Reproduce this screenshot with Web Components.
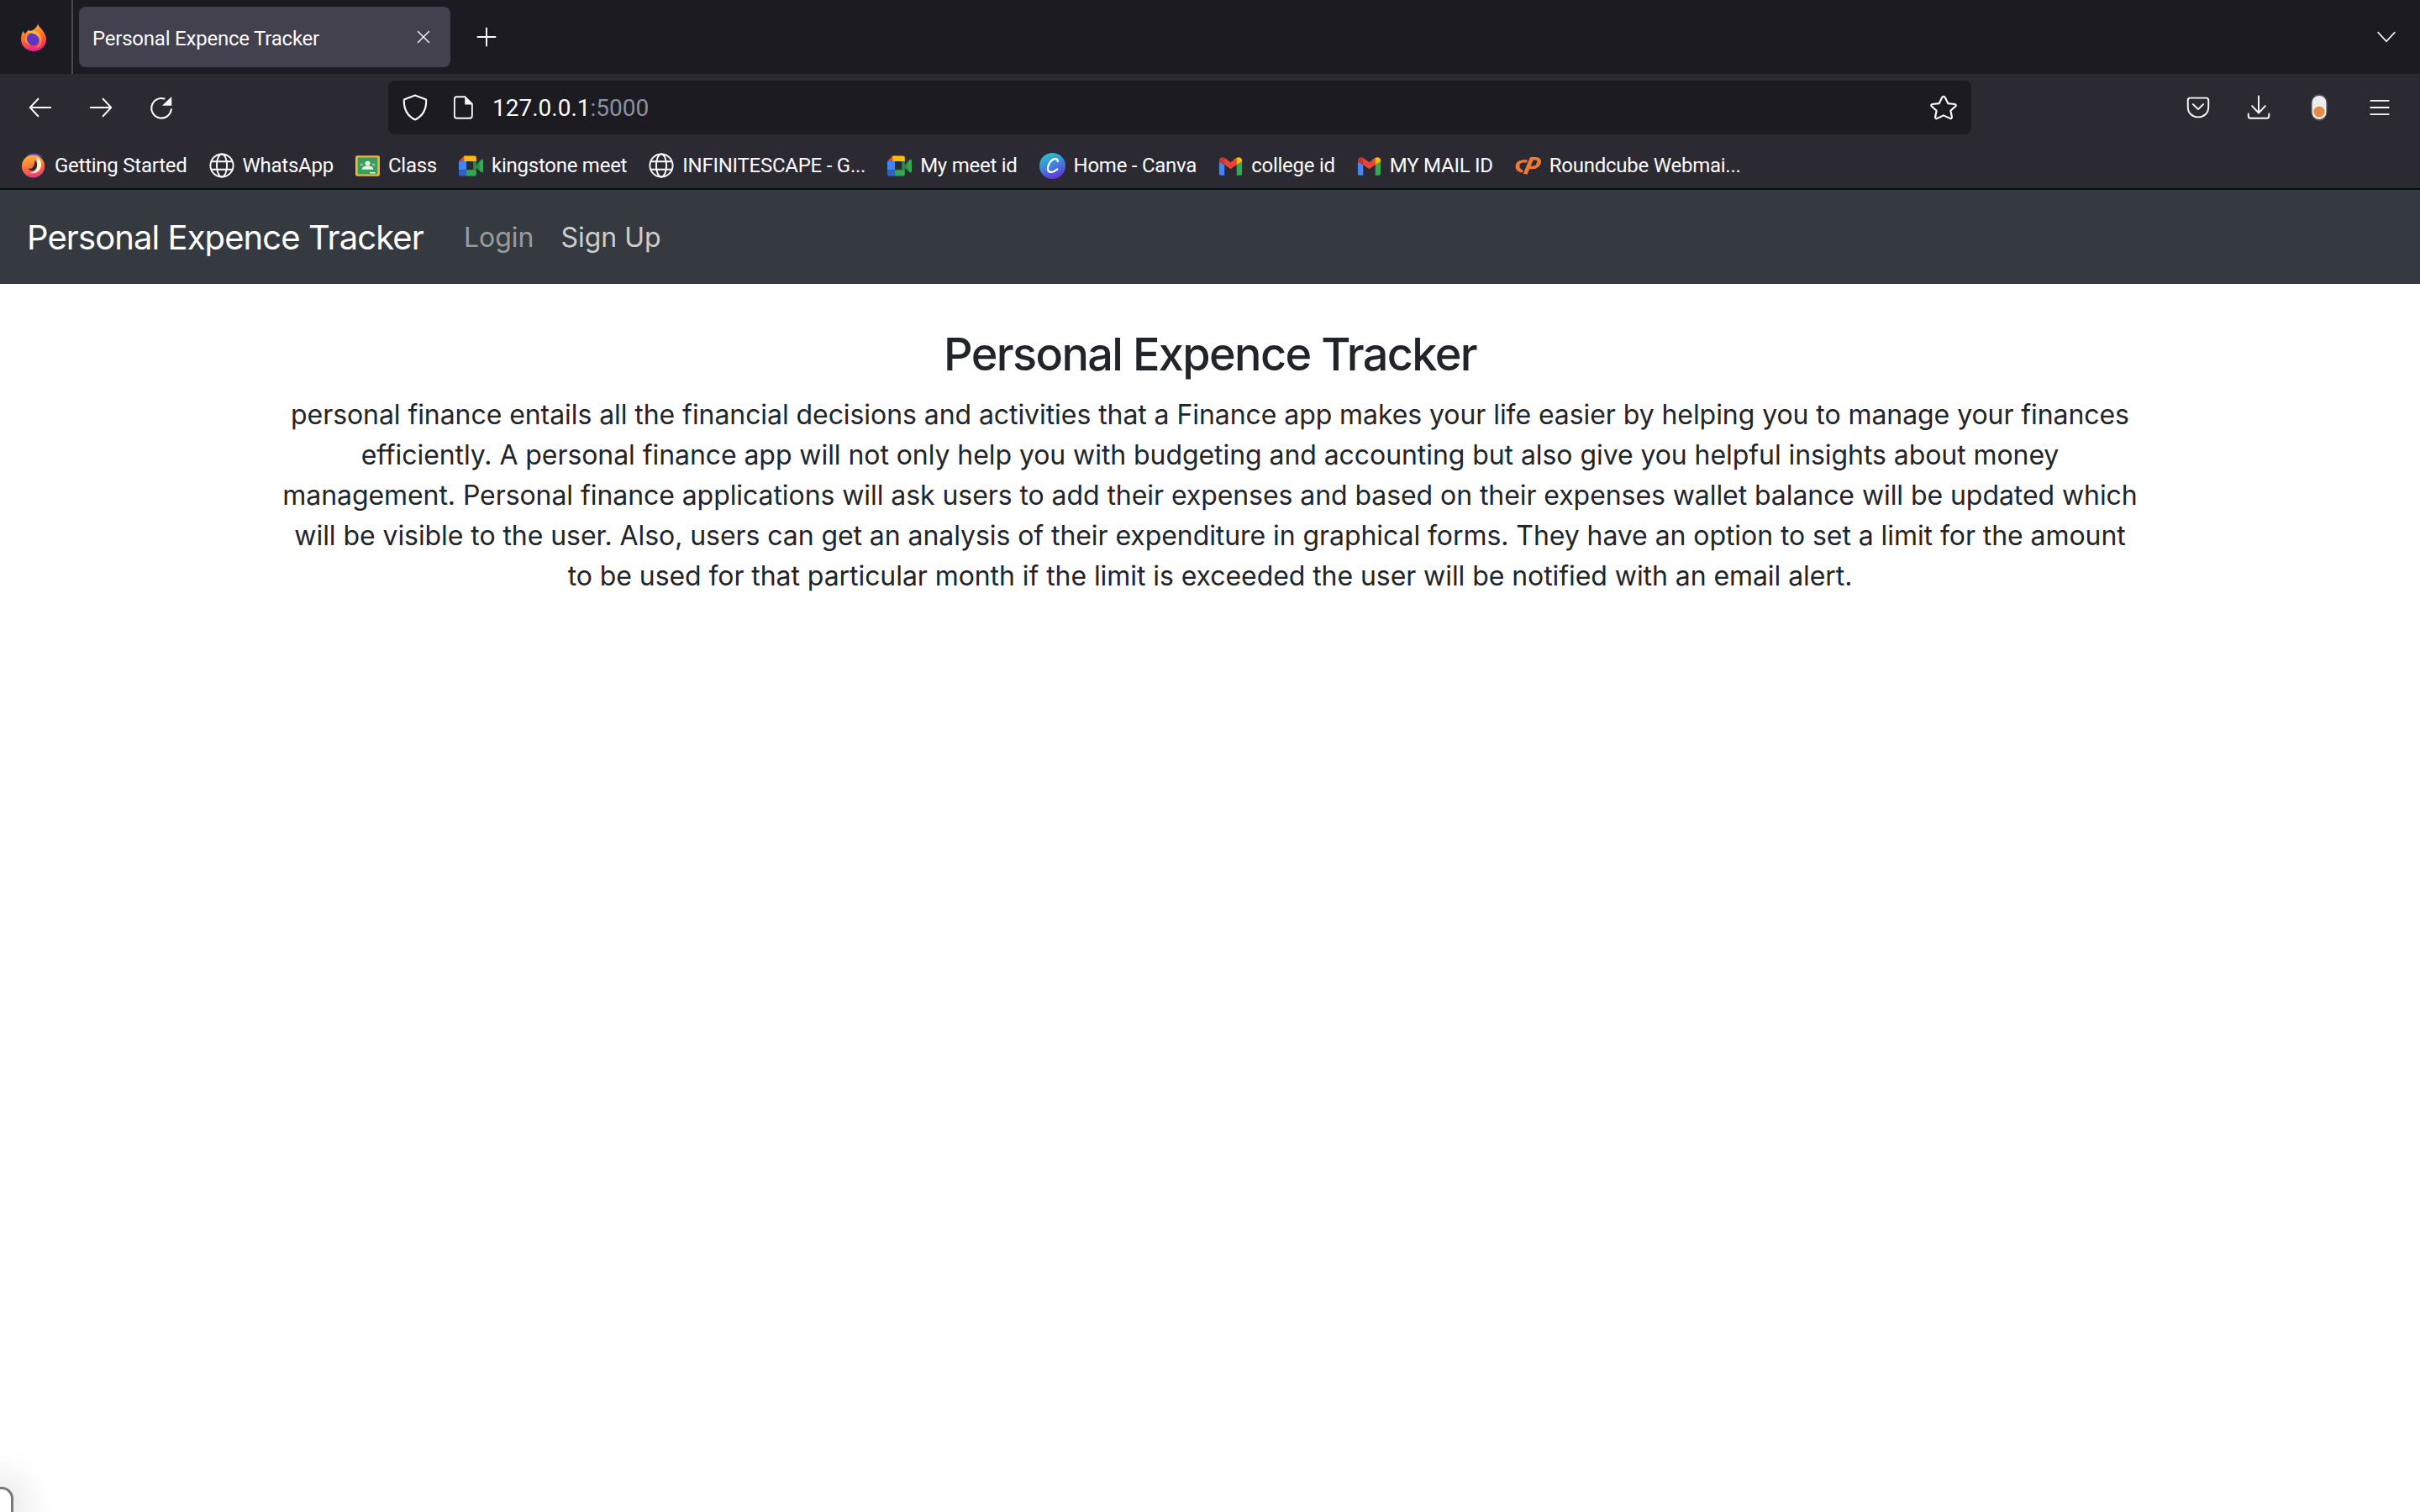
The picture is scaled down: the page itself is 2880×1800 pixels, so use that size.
<!DOCTYPE html>
<html lang="en">
<head>
<meta charset="utf-8">
<title>Personal Expence Tracker</title>
<style>
  html, body { margin: 0; padding: 0; background: #fff; }
  body { font-family: Inter, "Liberation Sans", sans-serif; }
</style>
</head>
<body>
<browser-window>
  <tab-strip title-text="Personal Expence Tracker"></tab-strip>
  <nav-toolbar address-host="127.0.0.1" address-port=":5000"></nav-toolbar>
  <bookmarks-bar>
    <bookmark-item icon="firefox-old" w="30" h="30">Getting Started</bookmark-item>
    <bookmark-item icon="globe" w="30" h="30">WhatsApp</bookmark-item>
    <bookmark-item icon="classroom" w="29" h="25">Class</bookmark-item>
    <bookmark-item icon="meet" w="29" h="25">kingstone meet</bookmark-item>
    <bookmark-item icon="globe" w="30" h="30">INFINITESCAPE - G...</bookmark-item>
    <bookmark-item icon="meet" w="29" h="25">My meet id</bookmark-item>
    <bookmark-item icon="canva" w="31" h="31">Home - Canva</bookmark-item>
    <bookmark-item icon="gmail" w="29" h="23">college id</bookmark-item>
    <bookmark-item icon="gmail" w="29" h="23">MY MAIL ID</bookmark-item>
    <bookmark-item icon="cpanel" w="31" h="22">Roundcube Webmai...</bookmark-item>
  </bookmarks-bar>
  <app-navbar brand="Personal Expence Tracker">
    <a slot="links" class="muted">Login</a>
    <a slot="links" class="hover">Sign Up</a>
  </app-navbar>
  <home-content heading="Personal Expence Tracker">
    personal finance entails all the financial decisions and activities that a Finance app makes your life easier by helping you to manage your finances<br>
    efficiently. A personal finance app will not only help you with budgeting and accounting but also give you helpful insights about money<br>
    management. Personal finance applications will ask users to add their expenses and based on their expenses wallet balance will be updated which<br>
    will be visible to the user. Also, users can get an analysis of their expenditure in graphical forms. They have an option to set a limit for the amount<br>
    to be used for that particular month if the limit is exceeded the user will be notified with an email alert.
  </home-content>
  <corner-peek></corner-peek>
</browser-window>

<script>
// iconos dibujados a mano, viewBox 32x32
const ICONS = {
  back: `<path d="M30 16H3M13 5 2 16l11 11" fill="none" stroke="#fbfbfe" stroke-width="2.2" stroke-linecap="round" stroke-linejoin="round"/>`,
  forward: `<path d="M2 16h27M19 5l11 11-11 11" fill="none" stroke="#fbfbfe" stroke-width="2.2" stroke-linecap="round" stroke-linejoin="round"/>`,
  reload: `<path d="M29.500 18.500A13.500 13.500 0 1 1 20 4" fill="none" stroke="#fbfbfe" stroke-width="2.400" stroke-linecap="round"/><path d="M30 1v12.500H17z" fill="#fbfbfe"/>`,
  shield: `<path d="M16 1.500 30 6.500c.6 11-3 19-14 24C5 25.500 1.400 17.500 2 6.500z" fill="none" stroke="#fbfbfe" stroke-width="2.200" stroke-linejoin="round"/>`,
  file: `<path d="M6 1.500h13L30.500 11v16a3.500 3.500 0 0 1-3.500 3.500H6A3.500 3.500 0 0 1 2.500 27V5A3.500 3.500 0 0 1 6 1.500z" fill="none" stroke="#fbfbfe" stroke-width="2.400"/><path d="M19 1.500V12h11.500z" fill="#fbfbfe"/>`,
  star: `<path d="M16 2c.9 0 1.400.5 1.800 1.200l3.500 7.600 8 1c1.500.2 2 1.700.9 2.700l-5.800 5.500 1.500 8c.2 1.500-1.100 2.500-2.500 1.800L16 26l-7.400 3.800c-1.400.7-2.700-.3-2.500-1.800l1.500-8-5.800-5.500c-1.100-1-.6-2.500.9-2.700l8-1 3.500-7.600C14.600 2.500 15.100 2 16 2z" fill="none" stroke="#fbfbfe" stroke-width="2.200" stroke-linejoin="round"/>`,
  pocket: `<path d="M5 3h22a3 3 0 0 1 3 3v9c0 9-6.500 14-14 14S2 24 2 15V6a3 3 0 0 1 3-3z" fill="none" stroke="#fbfbfe" stroke-width="2.200"/><path d="m9 11.500 7 7 7-7" fill="none" stroke="#fbfbfe" stroke-width="2.200" stroke-linecap="round" stroke-linejoin="round"/>`,
  download: `<path d="M16 1.500V22M7 14l9 9 9-9" fill="none" stroke="#fbfbfe" stroke-width="2.200" stroke-linecap="round" stroke-linejoin="round"/><path d="M2 24v3a2.500 2.500 0 0 0 2.500 2.500h23A2.500 2.500 0 0 0 30 27v-3" fill="none" stroke="#fbfbfe" stroke-width="2.200" stroke-linecap="round"/>`,
  extension: `<rect x="1.500" y="1" width="29" height="30" rx="14" ry="9" fill="#eceeec" stroke="#4c4b52" stroke-width="2"/><ellipse cx="16" cy="21" rx="10.500" ry="6.500" fill="#e88a45"/>`,
  menu: `<path d="M2 6h28M2 16h28M2 26h28" fill="none" stroke="#fbfbfe" stroke-width="2.400" stroke-linecap="butt"/>`,
  close: `<path d="m3 3 26 26M29 3 3 29" fill="none" stroke="#fbfbfe" stroke-width="2.800" stroke-linecap="round"/>`,
  plus: `<path d="M16 2v28M2 16h28" fill="none" stroke="#fbfbfe" stroke-width="2.600" stroke-linecap="round"/>`,
  chevron: `<path d="m3 9 13 14L29 9" fill="none" stroke="#fbfbfe" stroke-width="2.400" stroke-linecap="round" stroke-linejoin="round"/>`,
  globe: `<g fill="none" stroke="#fbfbfe" stroke-width="2.100"><circle cx="16" cy="16" r="14.500"/><ellipse cx="16" cy="16" rx="6.500" ry="14.500"/><path d="M2.500 11h27M2.500 21h27"/></g>`,
  firefox: `<defs>
      <linearGradient id="fx" x1=".3" y1="0" x2=".5" y2="1"><stop offset="0" stop-color="#ffc02e"/><stop offset=".5" stop-color="#ff6a2c"/><stop offset="1" stop-color="#e3208f"/></linearGradient>
      <linearGradient id="fz" x1="0" y1="0" x2=".3" y2="1"><stop offset="0" stop-color="#ffc23a"/><stop offset="1" stop-color="#ff7a2c"/></linearGradient>
    </defs>
    <path d="M21 0c.5 3 3.500 5 6 8.500 2.500 3.500 4 6.500 4 9.500 0 8-6.500 14-15 14S1 26 1 18c0-3 .8-6.500 2.500-9.500.5 1.500 1.200 2.500 2.500 3.500 1-2 2.500-3.500 4.500-5 .2 1.200.8 2 2 2.500C16 7 20.500 4.500 21 0z" fill="url(#fx)"/>
    <circle cx="15.500" cy="18" r="7.500" fill="#5b34c8"/>
    <path d="M9 10c5-3 12-2 15 3 2 4 2 8 .5 11.500C23 27 19 29 15.500 28.500c4 0 7.500-3.500 7.500-8 0-3.500-2-6.500-5-8-3-1.500-6-1-9-2.500z" fill="url(#fz)"/>
    <path d="M8 15c-1 4 1 8 4.500 9.500-4 0-7-3-7-7 0-1.500 1-2.500 2.500-2.500z" fill="#ff9a2c"/>`,
  "firefox-old": `<defs><linearGradient id="fy" x1=".3" y1="0" x2=".5" y2="1"><stop offset="0" stop-color="#ffb93a"/><stop offset=".55" stop-color="#ff6f3c"/><stop offset="1" stop-color="#e5397f"/></linearGradient></defs>
    <circle cx="15.500" cy="17" r="14.500" fill="url(#fy)"/>
    <path d="M7 4C12-.5 23-1 28 6.500 24 3.500 20 2.500 16 3 12.500 3.300 9.500 3.500 7 4z" fill="#7b4bd6"/>
    <path d="M20 5c5 3 7 9 5 14-2 6-9 8-14 6 5 0 9-3 9.500-8 .4-4-.5-8-.5-12z" fill="#fff3d8"/>
    <path d="M18 9c3 4 3 9 0 12-3 2.500-7 2-9-1 3 .5 5.500-.5 7-3 1-2.500 1-5 2-8z" fill="#2b2a33"/>`,
  classroom: `<rect x="1.500" y="1.800" width="29" height="28.400" fill="#3a9d5c" stroke="#f2b632" stroke-width="3" rx="1"/><circle cx="16" cy="12" r="3.400" fill="#e6f3ea"/><path d="M8.500 21.500c0-4.500 3.500-5.500 7.500-5.500s7.500 1 7.500 5.500z" fill="#e6f3ea"/><circle cx="8" cy="14" r="2" fill="#84c99f"/><circle cx="24" cy="14" r="2" fill="#84c99f"/><rect x="19" y="25.500" width="7" height="2" fill="#fff"/>`,
  meet: `<path d="M7 .5 0 9h10V.5z" fill="#ea4335"/><path d="M7 .5h13a3 3 0 0 1 3 3V9H7z" fill="#fbbc04"/><path d="M0 9h10v13H0z" fill="#4285f4"/><path d="M0 22h10v9.500H3a3 3 0 0 1-3-3z" fill="#2f62c9"/><path d="M10 22h13v6.500a3 3 0 0 1-3 3H10z" fill="#34a853"/><path d="M19 9h4v13h-4z" fill="#2d8a47"/><path d="m23 15 6.500-8.500c1-1 2.500-.5 2.500 1v17c0 1.500-1.500 2-2.500 1L23 19z" fill="#34a853"/><path d="m23 15 4-5v13l-4-4z" fill="#2d8a47"/>`,
  canva: `<defs><linearGradient id="cv" x1=".2" y1="0" x2=".6" y2="1"><stop offset="0" stop-color="#2ec4c6"/><stop offset=".55" stop-color="#3f7fe0"/><stop offset="1" stop-color="#6a2fd8"/></linearGradient></defs><circle cx="16" cy="16" r="16" fill="url(#cv)"/><path d="M22.500 10.500C22.500 7 19 6.500 16 8.500 12 11.500 9.500 17 10.500 21c1 3.500 6.500 3.500 11.500-1" fill="none" stroke="#fff" stroke-width="2.300" stroke-linecap="round"/>`,
  gmail: `<path d="M1 9v20c0 1.200.8 2.500 2.200 2.500H8V14z" fill="#4285f4"/><path d="M31 9v20c0 1.200-.8 2.500-2.200 2.500H24V14z" fill="#34a853"/><path d="M8 5 16 12.500 24 5v9l-8 7-8-7z" fill="#ea4335"/><path d="M1 7c0-4.500 4-7 7.500-4L12 6v4.500L8 14 1 9z" fill="#c5372c"/><path d="M31 7c0-4.500-4-7-7.500-4L20 6v4.500L24 14l7-5z" fill="#fbbc04"/><path d="M8 3 16 10 24 3v11l-8 7-8-7z" fill="#ea4335"/>`,
  cpanel: `<g fill="none" stroke="#ef7a35" stroke-width="5"><path d="M15 8.500h-4.500C5.500 8.500 3 13 3 17.500S6 26 9.500 26"/><path d="M12.500 31 20.500 4h5c3 0 4.500 3 4 6.500-.5 4-3 9-8 9H18" stroke-linejoin="round"/></g>`
};

class UiIcon extends HTMLElement {
  constructor() {
    super();
    this.attachShadow({ mode: 'open' });
  }
  connectedCallback() {
    const name = this.getAttribute('name');
    const w = this.getAttribute('w') || 32;
    const h = this.getAttribute('h') || w;
    this.shadowRoot.innerHTML = `
      <style>:host { display: block; width: ${w}px; height: ${h}px; flex: none; }</style>
      <svg xmlns="http://www.w3.org/2000/svg" viewBox="0 0 32 32" width="${w}" height="${h}" preserveAspectRatio="none" style="display:block;overflow:visible">${ICONS[name]}</svg>
    `;
  }
}
customElements.define('ui-icon', UiIcon);

class BrowserWindow extends HTMLElement {
  constructor() {
    super();
    this.attachShadow({ mode: 'open' }).innerHTML = `
      <style>
        :host {
          display: flex;
          flex-direction: column;
          position: relative;
          height: 1800px;
          overflow: hidden;
          background: #fff;
          font-family: Inter, "Liberation Sans", sans-serif;
        }
      </style>
      <slot></slot>
    `;
  }
}
customElements.define('browser-window', BrowserWindow);

class TabStrip extends HTMLElement {
  constructor() {
    super();
    this.attachShadow({ mode: 'open' });
  }
  connectedCallback() {
    this.shadowRoot.innerHTML = `
      <style>
        :host {
          display: flex;
          align-items: center;
          height: 88px;
          background: #1c1b22;
          color: #fbfbfe;
        }
        .logo { width: 85px; height: 88px; display: flex; align-items: center; justify-content: center; box-sizing: border-box; padding-right: 5px; }
        .sep { width: 2px; height: 88px; background: #4a4950; }
        .tab {
          display: flex;
          align-items: center;
          justify-content: space-between;
          box-sizing: border-box;
          width: 442px;
          height: 72px;
          margin-left: 7px;
          padding: 0 24px 0 16px;
          background: #42414d;
          border-radius: 8px;
          font: 24px Roboto, sans-serif;
          letter-spacing: -.22px;
        }
        .tab span { padding-top: 3px; }
        .new { margin-left: 31px; }
        .spacer { flex: 1; }
        .all { margin-right: 28px; }
      </style>
      <div class="logo"><ui-icon name="firefox" w="32" h="33"></ui-icon></div>
      <div class="sep"></div>
      <div class="tab"><span>${this.getAttribute('title-text')}</span><ui-icon name="close" w="16"></ui-icon></div>
      <ui-icon class="new" name="plus" w="24"></ui-icon>
      <div class="spacer"></div>
      <ui-icon class="all" name="chevron" w="24"></ui-icon>
    `;
  }
}
customElements.define('tab-strip', TabStrip);

class NavToolbar extends HTMLElement {
  constructor() {
    super();
    this.attachShadow({ mode: 'open' });
  }
  connectedCallback() {
    this.shadowRoot.innerHTML = `
      <style>
        :host {
          display: flex;
          align-items: center;
          box-sizing: border-box;
          height: 80px;
          padding: 8px 28px 8px;
          background: #2b2a33;
        }
        .group { display: flex; align-items: center; gap: 32px; }
        .slot { width: 40px; height: 40px; display: flex; align-items: center; justify-content: center; }
        .url {
          flex: 1;
          display: flex;
          align-items: center;
          height: 64px;
          margin: 0 250px;
          padding: 0 17px;
          background: #1c1b22;
          border-radius: 8px;
          color: #fbfbfe;
          font: 28px Roboto, sans-serif;
        }
        .url .file { margin-left: 30px; }
        .url .text { margin-left: 23px; flex: 1; }
        .url .port { color: #8f8f9d; }
      </style>
      <div class="group">
        <div class="slot"><ui-icon name="back" w="28" h="30"></ui-icon></div>
        <div class="slot"><ui-icon name="forward" w="28" h="30"></ui-icon></div>
        <div class="slot"><ui-icon name="reload" w="28"></ui-icon></div>
      </div>
      <div class="url">
        <ui-icon name="shield" w="30" h="32"></ui-icon>
        <ui-icon class="file" name="file" w="24" h="28"></ui-icon>
        <span class="text">${this.getAttribute('address-host')}<span class="port">${this.getAttribute('address-port')}</span></span>
        <ui-icon name="star" w="32" h="30"></ui-icon>
      </div>
      <div class="group">
        <div class="slot"><ui-icon name="pocket" w="28"></ui-icon></div>
        <div class="slot"><ui-icon name="download" w="28" h="30"></ui-icon></div>
        <div class="slot"><ui-icon name="extension" w="20" h="32"></ui-icon></div>
        <div class="slot"><ui-icon name="menu" w="26"></ui-icon></div>
      </div>
    `;
  }
}
customElements.define('nav-toolbar', NavToolbar);

class BookmarksBar extends HTMLElement {
  constructor() {
    super();
    this.attachShadow({ mode: 'open' }).innerHTML = `
      <style>
        :host {
          display: flex;
          align-items: center;
          gap: 26px;
          box-sizing: border-box;
          height: 58px;
          padding: 2px 25px 0;
          background: #2b2a33;
          border-bottom: 2px solid #0c0c0d;
          color: #fbfbfe;
          font: 24px Roboto, sans-serif;
          letter-spacing: -.25px;
        }
      </style>
      <slot></slot>
    `;
  }
}
customElements.define('bookmarks-bar', BookmarksBar);

class BookmarkItem extends HTMLElement {
  constructor() {
    super();
    this.attachShadow({ mode: 'open' });
  }
  connectedCallback() {
    const icon = this.getAttribute('icon');
    const w = this.getAttribute('w');
    const h = this.getAttribute('h');
    this.shadowRoot.innerHTML = `
      <style>
        :host { display: flex; align-items: center; gap: 10px; white-space: nowrap; }
      </style>
      <ui-icon name="${icon}" w="${w}" h="${h}"></ui-icon>
      <span><slot></slot></span>
    `;
  }
}
customElements.define('bookmark-item', BookmarkItem);

class AppNavbar extends HTMLElement {
  constructor() {
    super();
    this.attachShadow({ mode: 'open' });
  }
  connectedCallback() {
    this.shadowRoot.innerHTML = `
      <style>
        :host {
          display: flex;
          align-items: center;
          gap: 48px;
          box-sizing: border-box;
          height: 112px;
          padding: 0 32px;
          background: #343a40;
          font-family: Inter, "Liberation Sans", sans-serif;
        }
        .brand { color: #fff; font-size: 40px; letter-spacing: -.92px; }
        nav { display: flex; gap: 32px; font-size: 32px; }
        ::slotted(.muted) { color: rgba(255, 255, 255, .5); }
        ::slotted(.hover) { color: rgba(255, 255, 255, .75); }
      </style>
      <span class="brand">${this.getAttribute('brand')}</span>
      <nav><slot name="links"></slot></nav>
    `;
  }
}
customElements.define('app-navbar', AppNavbar);

class HomeContent extends HTMLElement {
  constructor() {
    super();
    this.attachShadow({ mode: 'open' });
  }
  connectedCallback() {
    this.shadowRoot.innerHTML = `
      <style>
        :host {
          display: block;
          padding: 50px 300px 0;
          text-align: center;
          color: #212529;
          font-family: Inter, "Liberation Sans", sans-serif;
        }
        h1 { margin: 0 0 15px; font-size: 54px; font-weight: 500; line-height: 67px; letter-spacing: -1.65px; }
        p { margin: 0; font-size: 32px; line-height: 48px; white-space: nowrap; letter-spacing: -.07px; }
      </style>
      <h1>${this.getAttribute('heading')}</h1>
      <p><slot></slot></p>
    `;
  }
}
customElements.define('home-content', HomeContent);

// esquina de la ventana de abajo, asoma sobre la pagina
class CornerPeek extends HTMLElement {
  constructor() {
    super();
    this.attachShadow({ mode: 'open' }).innerHTML = `
      <style>
        :host {
          position: absolute;
          left: -14px;
          bottom: -20px;
          width: 30px;
          height: 50px;
          box-sizing: border-box;
          background: #fff;
          border: 3px solid #77787a;
          border-radius: 14px;
          box-shadow: 0 0 44px 14px rgba(0, 0, 0, .1);
        }
      </style>
    `;
  }
}
customElements.define('corner-peek', CornerPeek);
</script>
</body>
</html>
